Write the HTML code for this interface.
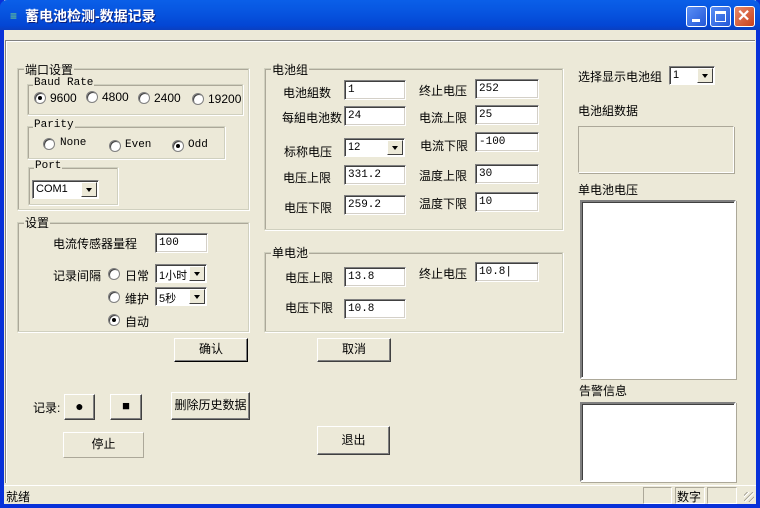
<!DOCTYPE html>
<html><head><meta charset="utf-8"><style>
*{margin:0;padding:0;box-sizing:border-box}
body{width:760px;height:508px;overflow:hidden;background:#ece9d8;font-family:"Liberation Sans","SimSun","WenQuanYi Zen Hei","Noto Sans CJK SC",sans-serif;font-size:12px;color:#000;position:relative}
.a{position:absolute;white-space:nowrap}
.frame{position:absolute;left:0;top:0;width:760px;height:508px;border:4px solid #0831d9;border-top:none;background:#ece9d8}
.title{position:absolute;left:0;top:0;width:760px;height:30px;background:linear-gradient(#0a5fe8,#0755e0 40%,#0346d4 85%,#0a3fc0);border-radius:7px 7px 0 0}
.tt{position:absolute;left:25px;top:6px;color:#fff;font-weight:bold;font-size:14px;text-shadow:1px 1px #0a1f7a}
.wb{position:absolute;top:6px;width:21px;height:21px;border:1px solid #fff;border-radius:3px;background:linear-gradient(135deg,#5a8ff5,#2357d8)}
.gb{position:absolute;border:1px solid #d0d0bf;box-shadow:inset 1px 1px #aca899,1px 1px #fff}
.gl{position:absolute;background:#ece9d8;padding:0 1px;white-space:nowrap}
.tb{position:absolute;background:#fff;border-top:1px solid #808080;border-left:1px solid #808080;border-bottom:1px solid #fff;border-right:1px solid #fff;box-shadow:inset 1px 1px #404040,inset -1px -1px #d4d0c8;padding:3px 0 0 3px;font-size:11px;font-family:"Liberation Mono","SimSun",monospace;height:20px}
.cb{position:absolute;background:#fff;border-top:1px solid #808080;border-left:1px solid #808080;border-bottom:1px solid #fff;border-right:1px solid #fff;box-shadow:inset 1px 1px #404040;padding:2px 0 0 3px;height:19px;font-size:11px}
.cb i{position:absolute;right:1px;top:1px;width:16px;height:15px;background:#ece9d8;border:1px solid;border-color:#fff #404040 #404040 #fff}
.cb i:after{content:"";position:absolute;left:4px;top:5px;border:3.5px solid transparent;border-top:4px solid #000}
.btn{position:absolute;background:#ece9d8;border:1px solid;border-color:#fff #404040 #404040 #fff;box-shadow:inset -1px -1px #808080;text-align:center}
.r{position:absolute;width:12px;height:12px;border-radius:50%;background:#fff;border:1px solid #808080;box-shadow:inset 1px 1px #404040}
.r.on:after{content:"";position:absolute;left:3px;top:3px;width:4px;height:4px;border-radius:50%;background:#000}
.mono{font-family:"Liberation Mono",monospace}
</style></head><body>
<div class="frame"></div>
<div class="title"></div>
<div class="a" style="left:10px;top:9px;color:#7fe07f;font-size:12px;font-weight:bold">≡</div>
<div class="tt">蓄电池检测-数据记录</div>
<div class="wb" style="left:686px"><div style="position:absolute;left:5px;top:12px;width:8px;height:3px;background:#fff"></div></div>
<div class="wb" style="left:710px"><div style="position:absolute;left:4px;top:4px;width:11px;height:11px;border:1px solid #fff;border-top:3px solid #fff"></div></div>
<div class="wb" style="left:734px;background:linear-gradient(135deg,#e88a6a,#c8401c)"><div style="position:absolute;left:2px;top:1px;color:#fff;font-weight:bold;font-size:16px;line-height:17px">✕</div></div>

<div class="a" style="left:5px;top:40px;width:560px;height:443px;border-top:1px solid #808080;border-left:1px solid #808080;box-shadow:1px 1px #fff inset"></div>
<div class="a" style="left:565px;top:40px;width:190px;height:2px;border-top:1px solid #808080;border-bottom:1px solid #fff"></div>

<div class="gb" style="left:17px;top:68px;width:232px;height:142px"></div><div class="gl" style="left:24px;top:61px">端口设置</div>
<div class="gb" style="left:27px;top:84px;width:216px;height:31px"></div><div class="gl mono" style="left:33px;top:77px;font-size:11px">Baud Rate</div>
<div class="r on" style="left:34px;top:92px"></div><div class="a" style="left:50px;top:91px">9600</div>
<div class="r" style="left:86px;top:91px"></div><div class="a" style="left:102px;top:90px">4800</div>
<div class="r" style="left:138px;top:92px"></div><div class="a" style="left:154px;top:91px">2400</div>
<div class="r" style="left:192px;top:93px"></div><div class="a" style="left:208px;top:92px">19200</div>
<div class="gb" style="left:27px;top:126px;width:198px;height:33px"></div><div class="gl mono" style="left:33px;top:119px;font-size:11px">Parity</div>
<div class="r" style="left:43px;top:138px"></div><div class="a mono" style="left:60px;top:137px;font-size:11px">None</div>
<div class="r" style="left:109px;top:140px"></div><div class="a mono" style="left:125px;top:139px;font-size:11px">Even</div>
<div class="r on" style="left:172px;top:140px"></div><div class="a mono" style="left:188px;top:139px;font-size:11px">Odd</div>
<div class="gb" style="left:28px;top:167px;width:90px;height:38px"></div><div class="gl mono" style="left:34px;top:160px;font-size:11px">Port</div>
<div class="cb" style="left:32px;top:180px;width:67px">COM1<i></i></div>

<div class="gb" style="left:17px;top:222px;width:232px;height:110px"></div><div class="gl" style="left:24px;top:214px">设置</div>
<div class="a" style="left:53px;top:235px">电流传感器量程</div>
<div class="tb" style="left:155px;top:233px;width:53px">100</div>
<div class="a" style="left:53px;top:267px">记录间隔</div>
<div class="r" style="left:108px;top:268px"></div><div class="a" style="left:125px;top:267px">日常</div>
<div class="cb" style="left:155px;top:264px;width:52px">1小时<i></i></div>
<div class="r" style="left:108px;top:291px"></div><div class="a" style="left:125px;top:290px">维护</div>
<div class="cb" style="left:155px;top:287px;width:52px">5秒<i></i></div>
<div class="r on" style="left:108px;top:314px"></div><div class="a" style="left:125px;top:313px">自动</div>
<div class="btn" style="left:174px;top:338px;width:74px;height:24px;line-height:21px;border-color:#fff #000 #000 #fff">确认</div>

<div class="a" style="left:33px;top:399px">记录:</div>
<div class="btn" style="left:64px;top:394px;width:31px;height:26px;line-height:22px;font-size:14px">●</div>
<div class="btn" style="left:110px;top:394px;width:32px;height:26px;line-height:22px;font-size:13px">■</div>
<div class="btn" style="left:171px;top:392px;width:79px;height:28px;line-height:24px">删除历史数据</div>
<div class="a" style="left:63px;top:432px;width:81px;height:26px;border:1px solid;border-color:#fff #aca899 #aca899 #fff;text-align:center;line-height:23px">停止</div>

<div class="gb" style="left:264px;top:68px;width:299px;height:162px"></div><div class="gl" style="left:271px;top:61px">电池组</div>
<div class="a" style="left:283px;top:84px">电池組数</div><div class="tb" style="left:344px;top:80px;width:62px">1</div>
<div class="a" style="left:282px;top:109px">每組电池数</div><div class="tb" style="left:344px;top:106px;width:62px">24</div>
<div class="a" style="left:284px;top:143px">标称电压</div><div class="cb" style="left:344px;top:138px;width:61px">12<i></i></div>
<div class="a" style="left:283px;top:169px">电压上限</div><div class="tb" style="left:344px;top:165px;width:62px">331.2</div>
<div class="a" style="left:284px;top:199px">电压下限</div><div class="tb" style="left:344px;top:195px;width:62px">259.2</div>
<div class="a" style="left:419px;top:82px">终止电压</div><div class="tb" style="left:475px;top:79px;width:64px">252</div>
<div class="a" style="left:419px;top:109px">电流上限</div><div class="tb" style="left:475px;top:105px;width:64px">25</div>
<div class="a" style="left:420px;top:137px">电流下限</div><div class="tb" style="left:475px;top:132px;width:64px">-100</div>
<div class="a" style="left:419px;top:167px">温度上限</div><div class="tb" style="left:475px;top:164px;width:64px">30</div>
<div class="a" style="left:419px;top:195px">温度下限</div><div class="tb" style="left:475px;top:192px;width:64px">10</div>

<div class="gb" style="left:264px;top:252px;width:299px;height:80px"></div><div class="gl" style="left:271px;top:244px">单电池</div>
<div class="a" style="left:285px;top:269px">电压上限</div><div class="tb" style="left:344px;top:267px;width:62px">13.8</div>
<div class="a" style="left:285px;top:299px">电压下限</div><div class="tb" style="left:344px;top:299px;width:62px">10.8</div>
<div class="a" style="left:419px;top:265px">终止电压</div><div class="tb" style="left:475px;top:262px;width:64px">10.8|</div>
<div class="btn" style="left:317px;top:338px;width:74px;height:24px;line-height:21px">取消</div>
<div class="btn" style="left:317px;top:426px;width:73px;height:29px;line-height:26px">退出</div>

<div class="a" style="left:578px;top:68px">选择显示电池组</div>
<div class="cb" style="left:669px;top:66px;width:46px">1<i></i></div>
<div class="a" style="left:578px;top:102px">电池組数据</div>
<div class="a" style="left:578px;top:126px;width:156px;height:47px;border:1px solid;border-color:#aca899 #fff #fff #aca899;box-shadow:1px 1px #aca899"></div>
<div class="a" style="left:578px;top:181px">单电池电压</div>
<div class="a" style="left:580px;top:200px;width:156px;height:179px;background:#fff;border:2px solid;border-color:#808080 #fff #fff #808080;box-shadow:inset 1px 1px #404040,1px 1px #aca899"></div>
<div class="a" style="left:579px;top:382px">告警信息</div>
<div class="a" style="left:580px;top:402px;width:156px;height:80px;background:#fff;border:2px solid;border-color:#808080 #fff #fff #808080;box-shadow:inset 1px 1px #404040,1px 1px #aca899"></div>

<div class="a" style="left:4px;top:485px;width:752px;height:1px;background:#fff"></div>
<div class="a" style="left:6px;top:488px">就绪</div>
<div class="a" style="left:643px;top:487px;width:29px;height:17px;border:1px solid;border-color:#aca899 #fff #fff #aca899"></div>
<div class="a" style="left:675px;top:487px;width:30px;height:17px;border:1px solid;border-color:#aca899 #fff #fff #aca899;padding-left:1px">数字</div>
<div class="a" style="left:707px;top:487px;width:30px;height:17px;border:1px solid;border-color:#aca899 #fff #fff #aca899"></div>
<div class="a" style="left:744px;top:492px;width:10px;height:10px;background:repeating-linear-gradient(135deg,transparent 0 2px,#aca899 2px 3px,#fff 3px 4px)"></div>
</body></html>
